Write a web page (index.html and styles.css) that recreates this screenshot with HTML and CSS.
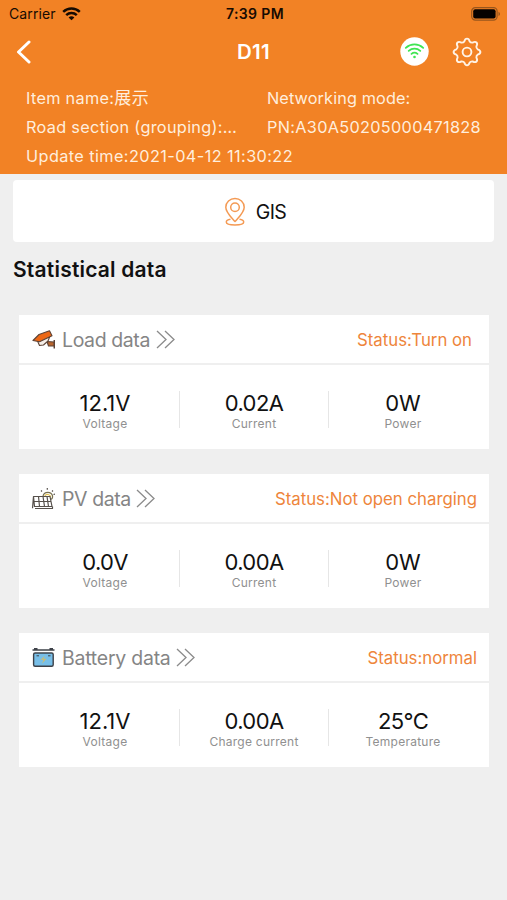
FILE: index.html
```html
<!DOCTYPE html>
<html lang="en">
<head>
<meta charset="utf-8">
<title>D11</title>
<link rel="stylesheet" href="styles.css">
</head>
<body>
<header class="header">
  <div class="statusbar">
    <div class="carrier"><span class="t-carrier">Carrier</span>
      <svg width="19" height="14" viewBox="0 0 19 14" fill="none" stroke="#160b02" stroke-width="2.5"><path d="M1.2 4.9C6 .5 13 .5 17.8 4.9M4.2 8.2c3-2.8 7.6-2.8 10.6 0"/><path d="M9.5 13.3L6.6 10.4c1.7-1.5 4.1-1.5 5.8 0z" fill="#160b02" stroke="none"/></svg>
    </div>
    <div class="clock">7:39 PM</div>
    <div class="battery"><svg width="30" height="14" viewBox="0 0 30 14"><rect x=".7" y=".7" width="25.4" height="12.4" rx="3.6" fill="none" stroke="#98561d" stroke-width="1.2"/><rect x="2.2" y="2.2" width="22.4" height="9.4" rx="2" fill="#060200"/><path d="M27.5 4.7c2 .8 2 3.6 0 4.4z" fill="#98561d"/></svg></div>
  </div>
  <nav class="nav">
    <svg class="back" width="16" height="26" viewBox="0 0 16 26" fill="none" stroke="#fff" stroke-width="3" stroke-linecap="round" stroke-linejoin="round"><path d="M14 3L3.500 13 14 23"/></svg>
    <h1 class="title">D11</h1>
    <div class="actions">
      <svg width="29" height="29" viewBox="0 0 29 29" fill="none" stroke="#3fe552" stroke-width="1.8" stroke-linecap="round"><circle cx="14.5" cy="14.5" r="14.2" fill="#fff" stroke="none"/><path d="M5.8 10.8c5-4.5 12.4-4.5 17.4 0M8.7 13.9c3.4-3 8.2-3 11.6 0M11.5 16.9c1.8-1.5 4.2-1.5 6 0"/><circle cx="14.5" cy="20" r="1.3" fill="#3fe552" stroke="none"/></svg>
      <svg width="30" height="30" viewBox="-15 -15 30 30" fill="none" stroke="#fff3e6" stroke-width="1.9" stroke-linejoin="round"><circle r="4.4"/><path d="M-2.7 -10.6C-2.2 -12.4 -1.6 -13.4 0 -13.4S2.2 -12.4 2.7 -10.6Q3.6 -9.2 5.6 -9.4C7.2 -10.3 8.4 -10.6 9.5 -9.5S10.3 -7.2 9.4 -5.6Q9.2 -3.6 10.6 -2.7C12.4 -2.2 13.4 -1.6 13.4 0S12.4 2.2 10.6 2.7Q9.2 3.6 9.4 5.6C10.3 7.2 10.6 8.4 9.5 9.5S7.2 10.3 5.6 9.4Q3.6 9.2 2.7 10.6C2.2 12.4 1.6 13.4 0 13.4S-2.2 12.4 -2.7 10.6Q-3.6 9.2 -5.6 9.4C-7.2 10.3 -8.4 10.6 -9.5 9.5S-10.3 7.2 -9.4 5.6Q-9.2 3.6 -10.6 2.7C-12.4 2.2 -13.4 1.6 -13.4 0S-12.4 -2.2 -10.6 -2.7Q-9.2 -3.6 -9.4 -5.6C-10.3 -7.2 -10.6 -8.4 -9.5 -9.5S-7.2 -10.3 -5.6 -9.4Q-3.6 -9.2 -2.7 -10.6z"/></svg>
    </div>
  </nav>
  <div class="info">
    <div>Item name:<span class="cjk">展示</span></div><div class="mode">Networking mode:</div>
    <div>Road section (grouping):…</div><div class="pn">PN:A30A50205000471828</div>
    <div class="update">Update time:2021-04-12 11:30:22</div>
  </div>
</header>
<main>
  <section class="gis">
    <svg width="22" height="30" viewBox="0 0 22 30" fill="none" stroke="#f49a54" stroke-width="1.5" stroke-linejoin="round"><path d="M11 24.5C7 19.8 1.8 15.5 1.8 10.2a9.2 8.8 0 0 1 18.4 0C20.2 15.5 15 19.8 11 24.5z"/><circle cx="11" cy="10.3" r="4.3"/><path d="M6.5 22.3C4 22.7 2.3 23.6 2.3 24.9c0 1.900 4 3 8.700 3s8.700-1.100 8.700-3c0-1.300-1.700-2.200-4.200-2.600"/></svg>
    <span>GIS</span>
  </section>
  <h2 class="heading">Statistical data</h2>
  <section class="card">
    <div class="card-head">
      <svg class="icon" width="24" height="24" viewBox="0 0 24 24" stroke="#5d4336" stroke-width="1.100" stroke-linejoin="round"><path d="M23.300 12v8.500" fill="none" stroke-width="1.500"/><path d="M16 13.500l1.500 4.500h5.500v-4z" fill="#b9662f"/><path d="M6.500 13l2 4.500 4-.5 4.500-4 2-5z" fill="#f5eee8"/><path d="M2 12.500L8 6.500l10.500-3.800 2.500 5-12.500 6z" fill="#ed6816"/></svg>
      <span class="name load">Load data</span>
      <svg class="more" width="19" height="19" viewBox="0 0 19 19"><path d="M1 1l9 8.500L1 18M9 1l9 8.500L9 18"/></svg>
      <span class="status turn">Status:Turn on</span>
    </div>
    <div class="stats">
      <div class="stat"><b>12.1V</b><span>Voltage</span></div>
      <div class="stat"><b class="amp">0.02A</b><span>Current</span></div>
      <div class="stat"><b>0W</b><span>Power</span></div>
    </div>
  </section>
  <section class="card">
    <div class="card-head">
      <svg class="icon" width="24" height="24" viewBox="0 0 24 24" fill="none" stroke="#57514c" stroke-width="1.200" stroke-linejoin="round"><path d="M12 9a5 5 0 0 1 9.600 0c.3 1.500-.3 2.500-1.300 3.500" stroke="#77704f"/><path d="M13.800 9a3.300 3.300 0 0 1 6 1" stroke="#e5c34f"/><path d="M11 4.500l-1-1M16.300 2.800V1M21 4.500l1-1M22.500 7.500l1.500-.5"/><path d="M2.500 9.500h16.500l2 10H3.500zM2.800 14.500h17.200M7.500 9.500l1 10M12 9.500l1.500 10M16 9.500l1.500 10M2.500 9.500L1.500 21.300M21.500 19.500v2H4"/></svg>
      <span class="name pv">PV data</span>
      <svg class="more" width="19" height="19" viewBox="0 0 19 19"><path d="M1 1l9 8.500L1 18M9 1l9 8.500L9 18"/></svg>
      <span class="status charging">Status:Not open charging</span>
    </div>
    <div class="stats">
      <div class="stat"><b class="amp">0.0V</b><span>Voltage</span></div>
      <div class="stat"><b class="amp">0.00A</b><span>Current</span></div>
      <div class="stat"><b>0W</b><span>Power</span></div>
    </div>
  </section>
  <section class="card">
    <div class="card-head">
      <svg class="icon" width="24" height="24" viewBox="0 0 24 24" fill="none" stroke="#3d4148" stroke-width="1.400"><path d="M1.500 4h22M3 2.800h3.500M18.500 2.800H22"/><rect x="2.600" y="7" width="19.600" height="13.300" rx="1.500" fill="#78bfe8"/><path d="M5.500 9.800H8M17 9.800h2.500" stroke-width="1"/><path d="M14 9.500l-4.500 4.200h3l-1.500 4 4.500-5h-3z" fill="#c7bd78" stroke="none"/></svg>
      <span class="name bat">Battery data</span>
      <svg class="more" width="19" height="19" viewBox="0 0 19 19"><path d="M1 1l9 8.500L1 18M9 1l9 8.500L9 18"/></svg>
      <span class="status normal">Status:normal</span>
    </div>
    <div class="stats">
      <div class="stat"><b>12.1V</b><span>Voltage</span></div>
      <div class="stat"><b class="amp">0.00A</b><span>Charge current</span></div>
      <div class="stat"><b class="amp">25°C</b><span>Temperature</span></div>
    </div>
  </section>
</main>
</body>
</html>
```

FILE: styles.css
```css
* { box-sizing: border-box; }
body { margin: 0; height: 900px; overflow: hidden; background: #efefef; color: #111; font-family: Inter, "Noto Sans CJK SC", sans-serif; }
svg { display: block; flex: none; }
.header { height: 174px; background: #f28225; color: #fff; }
.statusbar { height: 27px; display: grid; grid-template-columns: 1fr auto 1fr; align-items: center; padding: 0 6px 0 9px; color: #160b02; font-size: 14px; }
.carrier { display: flex; align-items: center; gap: 6px; letter-spacing: .1px; }
.clock { font-weight: 600; letter-spacing: .4px; }
.battery { justify-self: end; }
.nav { height: 49px; display: grid; grid-template-columns: 1fr auto 1fr; align-items: center; padding: 0 25px 0 15px; }
.title { margin: 0 0 0 10px; font-size: 20.500px; font-weight: 600; letter-spacing: .3px; }
.actions { display: flex; align-items: center; justify-content: flex-end; gap: 23px; }
.info { display: grid; grid-template-columns: 241px 1fr; grid-auto-rows: 29px; line-height: 29px; padding: 7.500px 0 0 26px; font-size: 16.300px; letter-spacing: .3px; color: #ffeedd; white-space: nowrap; }
.cjk { font-size: 17px; line-height: 1; }
.mode { letter-spacing: .1px; }
.update { grid-column: 1 / 3; letter-spacing: .4px; }
.gis { margin: 6px 13px 0; height: 62px; border-radius: 4px; background: #fff; display: flex; align-items: center; justify-content: center; gap: 10px; font-size: 19.500px; letter-spacing: -.6px; line-height: 24px; padding: 1px 0 0 3px; }
.heading { margin: 0 0 0 13px; height: 73px; line-height: 55px; font-size: 21px; font-weight: 600; letter-spacing: .2px; }
.card { margin: 0 18px 25px 19px; height: 134px; background: #fff; }
.card-head { height: 50px; border-bottom: 2px solid #efefef; display: flex; align-items: center; padding: 2px 12px 0; }
.name { margin: 0 5.500px 0 7px; font-size: 19.500px; letter-spacing: -.4px; color: #858585; white-space: nowrap; }
.bat { letter-spacing: -.25px; }
.more { margin-top: -1px; }
.more path { fill: none; stroke: #8b8b8b; stroke-width: 1.300; }
.status { margin-left: auto; font-size: 16.800px; color: #ee853b; white-space: nowrap; }
.turn { margin-right: 5px; }
.stats { height: 84px; display: grid; grid-template-columns: 149px 149px 1fr; padding: 8px 12px 0 11px; align-items: center; }
.stat { height: 37px; margin-top: -1px; padding-top: 1px; display: flex; flex-direction: column; align-items: center; border-left: 1px solid #e6e6e6; }
.stat:first-child { border-left-color: transparent; }
.stats { padding-top: 6px; }
.stat b { font-size: 22px; font-weight: 400; line-height: 22px; color: #111; }
.stat .amp { letter-spacing: -.6px; }
.stat span { font-size: 12px; line-height: 19px; color: #909090; letter-spacing: .25px; }
```
